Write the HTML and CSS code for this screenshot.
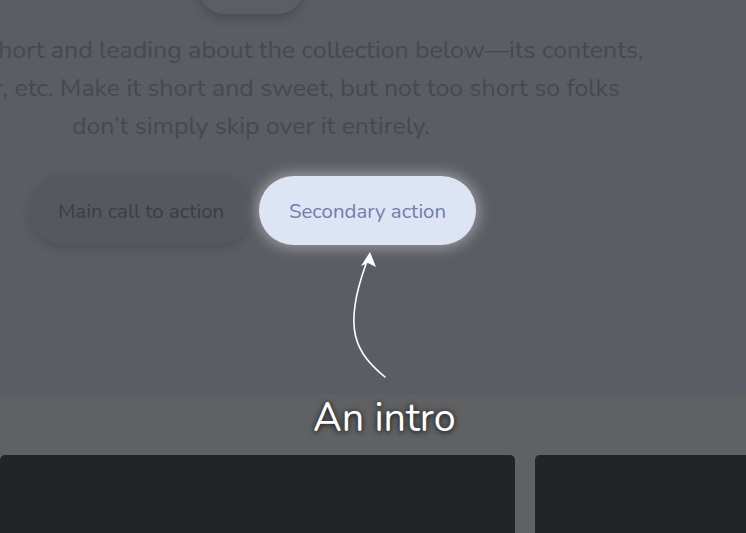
FILE: index.html
```html
<!DOCTYPE html>
<html lang="en">
<head>
<meta charset="utf-8">
<title>Album intro</title>
<link rel="stylesheet" href="styles.css">
</head>
<body>
<div class="page">
  <section class="hero">
    <div class="hero-inner">
      <div class="top-pill"></div>
      <p class="lead">
        <span>Something short and leading about the collection below—its contents,</span>
        <span>the creator, etc. Make it short and sweet, but not too short so folks</span>
        <span>don’t simply skip over it entirely.</span>
      </p>
      <div class="actions">
        <a class="btn btn-main">Main call to action</a>
        <a class="btn btn-secondary">Secondary action</a>
      </div>
    </div>
  </section>
  <section class="album">
    <div class="album-head"></div>
    <div class="cards">
      <div class="card"></div>
      <div class="card"></div>
    </div>
  </section>
  <svg class="arrow" width="60" height="140" viewBox="340 245 60 140" aria-hidden="true">
    <path d="M385 377 C 356 353, 342 330, 366 264" fill="none" stroke="#ffffff" stroke-width="1.6" stroke-linecap="round"/>
    <path d="M370 252 L376 267 L368 263 L361 266 Z" fill="#ffffff"/>
  </svg>
  <div class="intro-label">An intro</div>
</div>
</body>
</html>
```
FILE: styles.css
```css
html, body {
  margin: 0;
  padding: 0;
}
body {
  background: #5a5d63;
  font-family: "Nunito", "Open Sans", "Noto Sans", sans-serif;
  overflow: hidden;
  width: 746px;
  height: 533px;
}
.page {
  position: relative;
  width: 746px;
  height: 533px;
  overflow: hidden;
}
.hero {
  height: 395px;
  background: #5a5d63;
}
.hero-inner {
  width: 502px;
  display: flex;
  flex-direction: column;
  align-items: center;
}
.top-pill {
  width: 104px;
  height: 50px;
  margin-top: -36px;
  border-radius: 25px;
  background: #5b5e64;
  box-shadow: 0 4px 10px rgba(40, 42, 48, 0.35);
}
.lead {
  margin: 17px 0 0;
  display: flex;
  flex-direction: column;
  align-items: center;
  color: #464950;
  font-size: 24.9px;
  line-height: 38px;
}
.lead span {
  white-space: nowrap;
}
.actions {
  display: flex;
  gap: 7px;
  margin-top: 31px;
  margin-left: 4px;
}
.btn {
  height: 69px;
  border-radius: 35px;
  display: flex;
  align-items: center;
  justify-content: center;
  font-size: 20.4px;
  box-sizing: border-box;
}
.btn-main {
  width: 222px;
  background: #55585e;
  color: #3b3e49;
  box-shadow: 0 3px 10px rgba(50, 52, 58, 0.3);
}
.btn-secondary {
  width: 217px;
  background: #dde4f4;
  color: #6f7eab;
  box-shadow: 0 0 14px 3px rgba(255, 255, 255, 0.38);
}
.album {
  height: 138px;
  background: #606163;
}
.album-head {
  height: 60px;
}
.cards {
  display: grid;
  grid-template-columns: 515px 515px;
  gap: 20px;
}
.card {
  height: 90px;
  background: #232427;
  border-radius: 5px;
}
.arrow {
  position: absolute;
  left: 340px;
  top: 245px;
}
.intro-label {
  position: absolute;
  left: 313px;
  top: 393px;
  color: #ffffff;
  font-size: 39.5px;
  line-height: 50px;
  text-shadow: 0 0 6px rgba(0, 0, 0, 0.6), 0 2px 4px rgba(0, 0, 0, 0.4);
}
```
